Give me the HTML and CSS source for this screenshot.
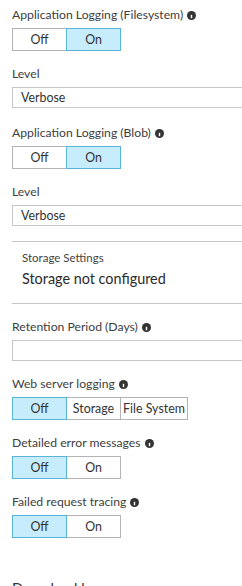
FILE: index.html
```html
<!doctype html>
<html>
  <head>
    <meta charset="utf-8" />
    <link rel="stylesheet" href="styles.css">
  </head>
  <body>
    <div class="blade">
      <div class="field">
        <div class="field-label">Application Logging (Filesystem) <svg class="info" viewBox="0 0 10 10"><circle cx="5" cy="5" r="5"/><rect x="4.2" y="4.2" width="1.6" height="3.8"/><circle cx="5" cy="2.8" r="0.9"/></svg></div>
        <div class="seg">
          <div class="seg-btn">Off</div>
          <div class="seg-btn selected">On</div>
        </div>
      </div>

      <div class="field spaced">
        <div class="field-label">Level</div>
        <div class="text-input">Verbose</div>
      </div>

      <div class="field">
        <div class="field-label">Application Logging (Blob) <svg class="info" viewBox="0 0 10 10"><circle cx="5" cy="5" r="5"/><rect x="4.2" y="4.2" width="1.6" height="3.8"/><circle cx="5" cy="2.8" r="0.9"/></svg></div>
        <div class="seg">
          <div class="seg-btn">Off</div>
          <div class="seg-btn selected">On</div>
        </div>
      </div>

      <div class="field">
        <div class="field-label">Level</div>
        <div class="text-input">Verbose</div>
      </div>

      <div class="storage">
        <div class="storage-title">Storage Settings</div>
        <div class="storage-value">Storage not configured</div>
      </div>

      <div class="field">
        <div class="field-label">Retention Period (Days) <svg class="info" viewBox="0 0 10 10"><circle cx="5" cy="5" r="5"/><rect x="4.2" y="4.2" width="1.6" height="3.8"/><circle cx="5" cy="2.8" r="0.9"/></svg></div>
        <div class="text-input"></div>
      </div>

      <div class="field">
        <div class="field-label">Web server logging <svg class="info" viewBox="0 0 10 10"><circle cx="5" cy="5" r="5"/><rect x="4.2" y="4.2" width="1.6" height="3.8"/><circle cx="5" cy="2.8" r="0.9"/></svg></div>
        <div class="seg">
          <div class="seg-btn selected">Off</div>
          <div class="seg-btn">Storage</div>
          <div class="seg-btn wide">File System</div>
        </div>
      </div>

      <div class="field">
        <div class="field-label">Detailed error messages <svg class="info" viewBox="0 0 10 10"><circle cx="5" cy="5" r="5"/><rect x="4.2" y="4.2" width="1.6" height="3.8"/><circle cx="5" cy="2.8" r="0.9"/></svg></div>
        <div class="seg">
          <div class="seg-btn selected">Off</div>
          <div class="seg-btn">On</div>
        </div>
      </div>

      <div class="field">
        <div class="field-label">Failed request tracing <svg class="info" viewBox="0 0 10 10"><circle cx="5" cy="5" r="5"/><rect x="4.2" y="4.2" width="1.6" height="3.8"/><circle cx="5" cy="2.8" r="0.9"/></svg></div>
        <div class="seg">
          <div class="seg-btn selected">Off</div>
          <div class="seg-btn">On</div>
        </div>
      </div>

      <div class="section-title">Download logs</div>
    </div>
  </body>
</html>
```

FILE: styles.css
```css
* {
  box-sizing: border-box;
}

html,
body {
  margin: 0;
  padding: 0;
  overflow: hidden;
}

body {
  width: 242px;
  height: 586px;
  background: #fff;
  color: #323232;
  font-family: 'Lato', 'Open Sans', sans-serif;
  font-size: 12.2px;
}

.blade {
  width: 270px;
  padding: 7px 0 0 12px;
}

/* Form fields */
.field {
  margin-bottom: 15px;
}

.field.spaced {
  margin-bottom: 17px;
}

.field-label {
  font-size: 12.2px;
  line-height: 16px;
  margin-bottom: 5px;
  color: #404040;
  white-space: nowrap;
}

.info {
  width: 9px;
  height: 9px;
  margin-left: 1px;
  vertical-align: -0.5px;
  fill: #333;
}

.info rect,
.info circle + circle {
  fill: #fff;
}

/* Segmented toggle */
.seg {
  display: flex;
}

.seg-btn {
  width: 55px;
  height: 23px;
  line-height: 21px;
  text-align: center;
  font-size: 12.4px;
  color: #333;
  border: 1px solid #b4b4b4;
  margin-left: -1px;
  background: #fff;
}

.seg-btn:first-child {
  margin-left: 0;
}

.seg-btn.wide {
  width: 68px;
}

.seg-btn.selected {
  background: #c7ecfc;
  border-color: #59b4d9;
  position: relative;
}

/* Text inputs */
.text-input {
  height: 21px;
  line-height: 19px;
  padding: 0 8px;
  border: 1px solid #c8c8c8;
  font-size: 12.4px;
  color: #333;
}

/* Storage block */
.storage {
  border-top: 1px solid #c8c8c8;
  border-bottom: 1px solid #c8c8c8;
  padding: 8px 10px 14px;
  margin-bottom: 15px;
}

.storage-title {
  font-size: 11.5px;
  line-height: 16px;
  color: #444;
}

.storage-value {
  margin-top: 3px;
  font-size: 14.4px;
  line-height: 20px;
  color: #2b2b2b;
}

.section-title {
  margin-top: 41px;
  font-size: 14.5px;
  line-height: 20px;
  color: #333;
}
```
